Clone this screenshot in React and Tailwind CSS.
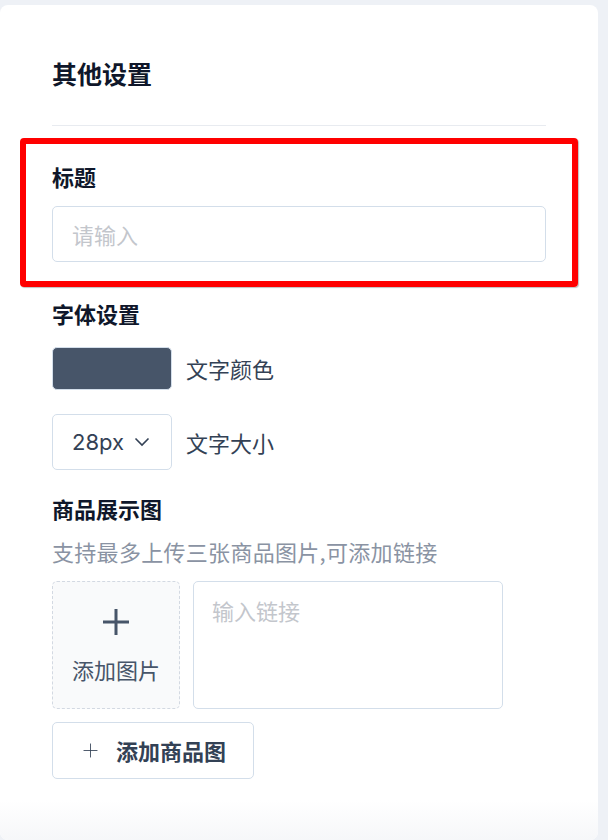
import React, { useState } from 'react';

const font = { fontFamily: '"Noto Sans CJK SC", "Noto Sans", sans-serif' };

const PlusIcon = ({ size = 28, stroke = 3 }) => (
  <svg width={size} height={size} viewBox="0 0 28 28" fill="none">
    <path d="M14 1v26M1 14h26" stroke="currentColor" strokeWidth={stroke} strokeLinecap="butt" />
  </svg>
);

const Chevron = () => (
  <svg width="16" height="10" viewBox="0 0 16 10" fill="none">
    <path d="M1.5 1.5l6.5 6.5 6.5-6.5" stroke="currentColor" strokeWidth="1.6" />
  </svg>
);

const App = () => {
  const [title, setTitle] = useState('');
  const [link, setLink] = useState('');

  return (
    <div className="min-h-[840px] bg-[#eef1f6] pt-[5px] overflow-hidden" style={font}>
      <div className="relative w-[598px] min-h-[835px] rounded-lg bg-white">
        {/* Header */}
        <div className="px-[52px] pt-[49px]">
          <h2 className="text-[25px] leading-[38px] font-bold text-[#0f172a]">其他设置</h2>
          <div className="mt-[33px] h-px bg-[#e8ebf0]" />
        </div>

        {/* Title section (highlighted) */}
        <div className="mx-[20px] mt-[12px] rounded-[4px] border-[6px] border-[#ff0000] px-[26px] pt-[16px] pb-[19px] shadow-[1px_1px_1px_rgba(0,0,0,0.25)]">
          <label className="block text-[22px] leading-[33px] font-bold text-[#0f172a]">标题</label>
          <input
            value={title}
            onChange={e => setTitle(e.target.value)}
            placeholder="请输入"
            className="mt-[13px] block h-[56px] w-full rounded-[5px] border border-[#d3deea] px-[19px] text-[22px] text-[#334155] outline-none placeholder:text-[#c3c6cc]"
          />
        </div>

        <div className="px-[52px]">
          {/* Font settings */}
          <div className="mt-[10px] text-[22px] leading-[33px] font-bold text-[#0f172a]">字体设置</div>
          <div className="mt-[17px] flex items-center gap-[14px]">
            <div className="h-[43px] w-[120px] rounded-[5px] border border-[#d3deea] bg-[#475569]" />
            <span className="text-[22px] leading-[33px] text-[#334155]">文字颜色</span>
          </div>
          <div className="mt-[24px] flex items-center gap-[14px]">
            <button className="flex h-[56px] w-[120px] items-center justify-center gap-[10px] rounded-[5px] border border-[#d3deea] pr-[2px] text-[#334155]">
              <span className="text-[22px]" style={{ fontFamily: 'Inter, "Noto Sans", sans-serif' }}>28px</span>
              <Chevron />
            </button>
            <span className="text-[22px] leading-[33px] text-[#334155]">文字大小</span>
          </div>

          {/* Product images */}
          <div className="mt-[22px] text-[22px] leading-[33px] font-bold text-[#0f172a]">商品展示图</div>
          <p className="mt-[10px] text-[22px] leading-[33px] tracking-[0.3px] text-[#8a93a3]">支持最多上传三张商品图片,可添加链接</p>
          <div className="mt-[13px] flex gap-[13px]">
            <div className="flex h-[128px] w-[128px] flex-col items-center justify-center rounded-[5px] border border-dashed border-[#d3d9e2] bg-[#f9fafb] text-[#475569]">
              <PlusIcon />
              <span className="mt-[20px] text-[22px] leading-[26px]">添加图片</span>
            </div>
            <textarea
              value={link}
              onChange={e => setLink(e.target.value)}
              placeholder="输入链接"
              className="h-[128px] w-[310px] resize-none rounded-[5px] border border-[#d3deea] px-[18px] py-[12px] text-[22px] text-[#334155] outline-none placeholder:text-[#c3c6cc]"
            />
          </div>
          <button className="mt-[13px] flex h-[57px] w-[202px] items-center rounded-[5px] border border-[#d3deea] pl-[30px] text-[#334155]">
            <PlusIcon size={15} stroke={1.6} />
            <span className="ml-[18px] text-[22px] font-semibold">添加商品图</span>
          </button>
        </div>

        {/* bottom fade */}
        <div className="absolute bottom-0 left-0 right-0 h-[40px] rounded-b-lg bg-gradient-to-b from-white to-[#f6f7f9]" />
      </div>
    </div>
  );
};

export default App;
